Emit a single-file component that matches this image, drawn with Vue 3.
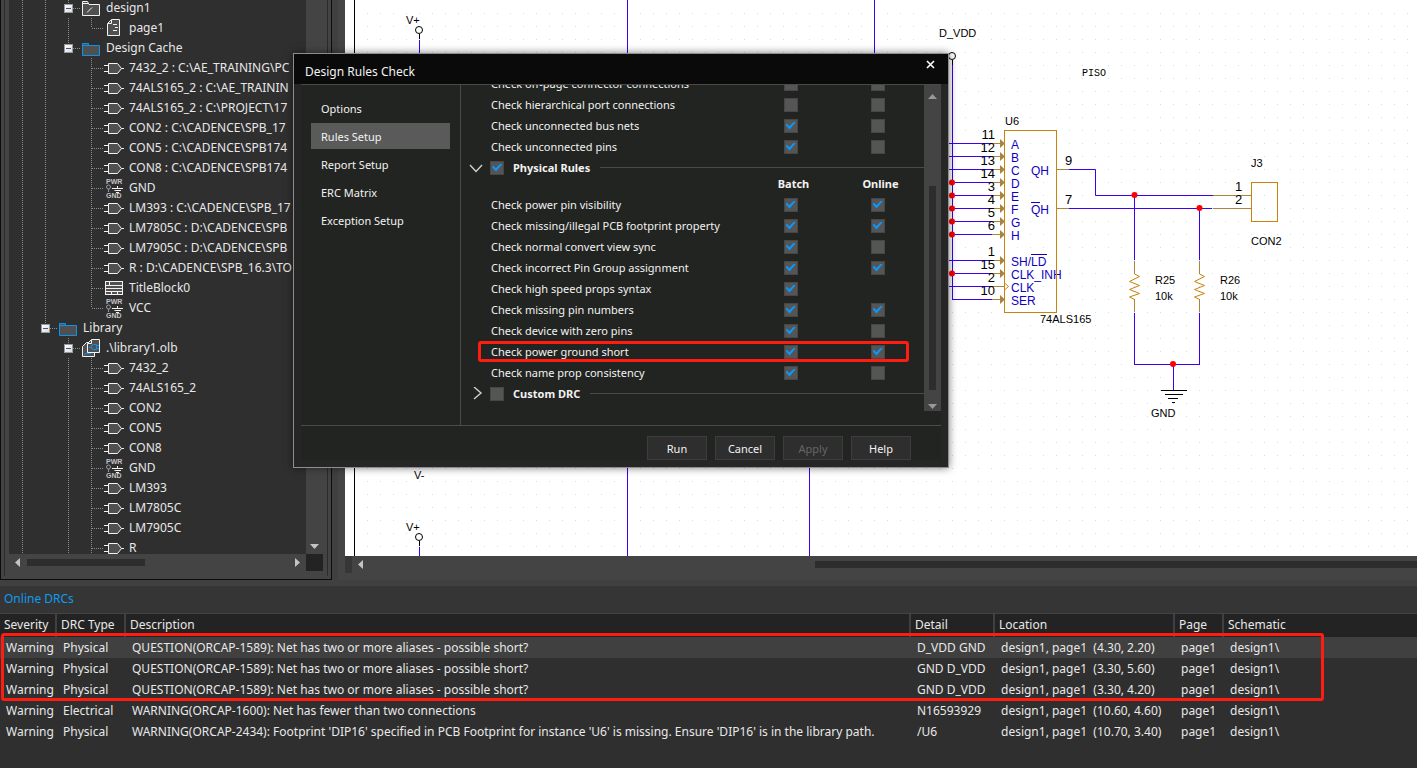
<script setup>
import { ref } from 'vue'

const part = (name, guides = 'vv t') => ({ name, guides, icon: 'gate' })

const tree = [
  { name: 'design1', guides: 'vvX', icon: 'design' },
  { name: 'page1', guides: 'vvvl', icon: 'page' },
  { name: 'Design Cache', guides: 'vvE', icon: 'folder' },
  part('7432_2 : C:\\AE_TRAINING\\PC'),
  part('74ALS165_2 : C:\\AE_TRAININ'),
  part('74ALS165_2 : C:\\PROJECT\\17'),
  part('CON2 : C:\\CADENCE\\SPB_17'),
  part('CON5 : C:\\CADENCE\\SPB174'),
  part('CON8 : C:\\CADENCE\\SPB174'),
  { name: 'GND', guides: 'vv t', icon: 'power' },
  part('LM393 : C:\\CADENCE\\SPB_17'),
  part('LM7805C : D:\\CADENCE\\SPB'),
  part('LM7905C : D:\\CADENCE\\SPB'),
  part('R : D:\\CADENCE\\SPB_16.3\\TO'),
  { name: 'TitleBlock0', guides: 'vv t', icon: 'title' },
  { name: 'VCC', guides: 'vv l', icon: 'power' },
  { name: 'Library', guides: 'vE', icon: 'folder' },
  { name: '.\\library1.olb', guides: 'v X', icon: 'library' },
  part('7432_2', 'v vt'),
  part('74ALS165_2', 'v vt'),
  part('CON2', 'v vt'),
  part('CON5', 'v vt'),
  part('CON8', 'v vt'),
  { name: 'GND', guides: 'v vt', icon: 'power' },
  part('LM393', 'v vt'),
  part('LM7805C', 'v vt'),
  part('LM7905C', 'v vt'),
  part('R', 'v vt'),
]

const tabs = ['Options', 'Rules Setup', 'Report Setup', 'ERC Matrix', 'Exception Setup']
const activeTab = ref('Rules Setup')

const electrical = ref([
  { label: 'Check off-page connector connections', batch: false, online: false },
  { label: 'Check hierarchical port connections', batch: false, online: false },
  { label: 'Check unconnected bus nets', batch: true, online: false },
  { label: 'Check unconnected pins', batch: true, online: false },
])
const physical = ref([
  { label: 'Check power pin visibility', batch: true, online: true },
  { label: 'Check missing/illegal PCB footprint property', batch: true, online: true },
  { label: 'Check normal convert view sync', batch: true, online: false },
  { label: 'Check incorrect Pin Group assignment', batch: true, online: true },
  { label: 'Check high speed props syntax', batch: true, online: null },
  { label: 'Check missing pin numbers', batch: true, online: true },
  { label: 'Check device with zero pins', batch: true, online: false },
  { label: 'Check power ground short', batch: true, online: true, marked: true },
  { label: 'Check name prop consistency', batch: true, online: false },
])
const physicalOn = ref(true)
const customOn = ref(false)

const headers = ['Severity', 'DRC Type', 'Description', 'Detail', 'Location', 'Page', 'Schematic']
const alias = 'QUESTION(ORCAP-1589): Net has two or more aliases - possible short?'
const drcs = [
  ['Warning', 'Physical', alias, 'D_VDD GND', 'design1, page1  (4.30, 2.20)', 'page1', 'design1\\'],
  ['Warning', 'Physical', alias, 'GND D_VDD', 'design1, page1  (3.30, 5.60)', 'page1', 'design1\\'],
  ['Warning', 'Physical', alias, 'GND D_VDD', 'design1, page1  (3.30, 4.20)', 'page1', 'design1\\'],
  ['Warning', 'Electrical', 'WARNING(ORCAP-1600): Net has fewer than two connections', 'N16593929', 'design1, page1  (10.60, 4.60)', 'page1', 'design1\\'],
  ['Warning', 'Physical', "WARNING(ORCAP-2434): Footprint 'DIP16' specified in PCB Footprint for instance 'U6' is missing. Ensure 'DIP16' is in the library path.", '/U6', 'design1, page1  (10.70, 3.40)', 'page1', 'design1\\'],
]

const pins = [
  { n: '11', t: 'A', y: 143.5, from: 940 },
  { n: '12', t: 'B', y: 156.5, from: 940 },
  { n: '13', t: 'C', y: 169.5, from: 940 },
  { n: '14', t: 'D', y: 182.5, from: 952, dot: true },
  { n: '3', t: 'E', y: 195.5, from: 952, dot: true },
  { n: '4', t: 'F', y: 208.5, from: 952, dot: true },
  { n: '5', t: 'G', y: 221.5, from: 952, dot: true },
  { n: '6', t: 'H', y: 234.5, from: 952, dot: true },
  { n: '1', t: 'SH/LD', y: 260.5, from: 940 },
  { n: '15', t: 'CLK_INH', y: 273.5, from: 952, dot: true },
  { n: '2', t: 'CLK', y: 286.5, from: 940, clock: true },
  { n: '10', t: 'SER', y: 299.5, from: 952 },
]
const resistors = [
  { x: 1134.5, top: 195, name: 'R25' },
  { x: 1199.5, top: 208, name: 'R26' },
]
</script>

<template>
  <div class="app">
    <main class="workspace">
      <aside class="project">
        <div class="tree-frame">
          <ul class="tree">
            <li v-for="(node, i) in tree" :key="i" class="node">
              <template v-for="(g, k) in node.guides.split('')" :key="k">
                <span class="guide">
                  <svg class="guide-lines" width="23" height="20">
                    <path v-if="g === 'v' || g === 't'" d="M11.5 0V20" />
                    <path v-if="g === 'l' || g === 'E' || g === 'X'" d="M11.5 0V10" />
                    <path v-if="g !== 'v' && g !== ' '" d="M12 10.5H24" />
                  </svg>
                  <button v-if="g === 'E' || g === 'X'" class="expander" :aria-label="'Collapse ' + node.name"></button>
                </span>
              </template>
              <svg class="node-icon" width="22" height="20">
                <g v-if="node.icon === 'gate'" class="white">
                  <path d="M1 7.5H5M1 13.5H5M18 10.5H21" />
                  <path class="fill" d="M5.5 5.5H14.5L18.5 10.5L14.5 15.5H5.5Z" />
                </g>
                <g v-else-if="node.icon === 'design'" class="white">
                  <path class="fill" d="M2.5 17.5V3.5H7.5L9 6.5H19.5V17.5Z" />
                  <path d="M2.5 5.5H8M7 14.5L12 9.5" />
                </g>
                <g v-else-if="node.icon === 'folder'" class="blue">
                  <path class="fill" d="M2.5 17.5V5.5H8.5V7.5H19.5V17.5Z" />
                  <path d="M2.5 7.5H9" />
                </g>
                <g v-else-if="node.icon === 'page'" class="white">
                  <path class="fill" d="M8.5 1.5H16.5V17.5H4.5V5.5Z" />
                  <path d="M5 5.5H8.5V2M10 6.5H14M12 9.5H15M10 12.5H14" />
                </g>
                <g v-else-if="node.icon === 'title'" class="white">
                  <rect class="fill" x="2.5" y="3.5" width="17" height="13" />
                  <path d="M3 7.5H19M3 10.5H19M3 13.5H19M6.5 4V7M8.5 14V16M14.5 14V16" />
                </g>
                <g v-else-if="node.icon === 'power'">
                  <text class="tiny" x="3" y="6">PWR</text>
                  <text class="tiny" x="3" y="20">GND</text>
                  <g class="white thin">
                    <circle class="dim" cx="5.5" cy="9" r="2" />
                    <path class="dim" d="M5.5 11V14" />
                    <path d="M9 10.5H20M11.5 12.5H18M13 14.5H16M14.5 8V10" />
                  </g>
                </g>
                <g v-else class="white">
                  <path class="fill" d="M2.5 18.5V8.5L6.5 4.5H14.5V18.5Z" />
                  <path class="fill" d="M7.5 14.5V5.5L11.5 1.5H19.5V14.5Z" />
                  <path d="M8 5.5H11.5V2" />
                  <path class="plug" d="M9 9.5H11M11.5 7.5L13.5 6.5H16.5V11.5H13.5L11.5 10.5ZM16.5 7.5H19M16.5 10.5H19M4 16.5L7 15.5H11" />
                </g>
              </svg>
              <span class="node-name">{{ node.name }}</span>
            </li>
          </ul>
          <div class="track-v tree-v"><i class="arrow down"></i></div>
          <div class="track-h tree-h">
            <i class="arrow left"></i><span class="thumb-h"></span><i class="arrow right"></i>
          </div>
          <div class="corner"></div>
        </div>
      </aside>

      <section class="editor">
        <div class="canvas">
          <svg class="sheet" width="100%" height="100%">
            <defs>
              <pattern id="grid" x="3" y="0" width="13" height="13" patternUnits="userSpaceOnUse">
                <rect width="1" height="1" fill="#bfe4f8" />
              </pattern>
            </defs>
            <g transform="translate(-345 0)">
              <rect x="356" y="10" width="4000" height="2000" fill="url(#grid)" />
              <path class="ink" d="M354.5 0V2000" />
              <path class="wire" d="M419.5 40V200M627.5 0V2000M874.5 0V400M809.5 300V2000M419.5 547V2000" />
              <g class="ink">
                <circle cx="419" cy="30" r="3.5" />
                <path d="M419.5 34V39M419.5 541V546M952.5 60V65" />
                <circle cx="419" cy="537" r="3.5" />
                <circle cx="952" cy="56" r="3.5" />
              </g>
              <text class="small" x="406" y="24">V+</text>
              <text class="small" x="414" y="479">V-</text>
              <text class="small" x="406" y="531">V+</text>
              <text class="small" x="939" y="37">D_VDD</text>
              <text class="mono" x="1082" y="76">PISO</text>
              <text class="small" x="1005" y="125">U6</text>
              <text class="small" x="1040" y="323">74ALS165</text>

              <path class="wire" d="M952.5 65V299.5" />
              <g v-for="p in pins" :key="p.t">
                <path class="wire" :d="`M${p.from} ${p.y}H992`" />
                <path class="lead" :d="`M992 ${p.y}H1004`" />
                <path v-if="p.clock" class="body" :d="`M1004.5 ${p.y - 3.5}L1008.5 ${p.y}L1004.5 ${p.y + 3.5}`" />
                <path v-else class="tip" :d="`M1000 ${p.y - 4.5}L1005 ${p.y}L1000 ${p.y + 4.5}Z`" />
                <circle v-if="p.dot" class="joint" cx="952" :cy="p.y" r="3" />
                <text class="pin" x="995" :y="p.y - 4.5" text-anchor="end">{{ p.n }}</text>
                <text class="port" x="1011" :y="p.y + 5.5">{{ p.t }}</text>
              </g>
              <rect class="body" x="1004.5" y="130.5" width="52" height="182" />
              <text class="port" x="1031" y="175">QH</text>
              <text class="port" x="1031" y="214">QH</text>
              <path class="bar" d="M1031 202.5H1040M1031 254.5H1047" />

              <path class="lead" d="M1057 169.5H1069M1057 208.5H1069M1213 195.5H1251M1213 208.5H1251" />
              <path class="wire" d="M1069 169.5H1095.5V195.5H1213M1069 208.5H1212" />
              <text class="pin" x="1065" y="165">9</text>
              <text class="pin" x="1065" y="204">7</text>
              <text class="pin" x="1235" y="191">1</text>
              <text class="pin" x="1235" y="204">2</text>
              <rect class="body" x="1251.5" y="182.5" width="26" height="39" />
              <text class="small" x="1251" y="167">J3</text>
              <text class="small" x="1251" y="245">CON2</text>

              <g v-for="r in resistors" :key="r.name">
                <path class="wire" :d="`M${r.x} ${r.top}V260M${r.x} 313V364`" />
                <path class="lead" :d="`M${r.x} 261V274M${r.x} 299V312`" />
                <path class="body" :d="`M${r.x} 274l5 2.5l-10 5l10 4l-10 4l10 4l-10 3.5l5 2.5`" />
                <text class="small" :x="r.x + 20.5" y="284">{{ r.name }}</text>
                <text class="small" :x="r.x + 20.5" y="300">10k</text>
                <circle class="joint" :cx="r.x" :cy="r.top" r="3" />
              </g>
              <path class="wire" d="M1134 364.5H1200M1173.5 364V390" />
              <circle class="joint" cx="1173" cy="364" r="3" />
              <path class="ink" d="M1161 390.5H1187M1165 394.5H1183M1168 398.5H1178M1172 402.5H1175" />
              <text class="small" x="1151" y="417">GND</text>
            </g>
          </svg>
        </div>
        <div class="track-h editor-h"><i class="arrow left"></i><span class="thumb-h"></span></div>
      </section>

      <section class="dialog" role="dialog" aria-labelledby="dialog-title">
        <header class="dialog-head">
          <h2 id="dialog-title">Design Rules Check</h2>
          <button class="close" aria-label="Close">
            <svg width="9" height="9"><path d="M1 1L8 8M8 1L1 8" /></svg>
          </button>
        </header>
        <div class="dialog-body">
          <nav class="tabs">
            <button v-for="t in tabs" :key="t" class="tab" :class="{ active: t === activeTab }" @click="activeTab = t">{{ t }}</button>
          </nav>
          <div class="rules">
            <div class="rule-list">
              <div v-for="r in electrical" :key="r.label" class="rule">
                <span class="rule-name">{{ r.label }}</span>
                <input v-model="r.batch" type="checkbox" :aria-label="r.label + ', batch'" />
                <input v-model="r.online" type="checkbox" :aria-label="r.label + ', online'" />
              </div>
              <div class="group">
                <svg class="chevron" width="14" height="14"><path d="M1 4L7 10.5L13 4" /></svg>
                <input id="physical" v-model="physicalOn" type="checkbox" />
                <label for="physical">Physical Rules</label>
                <hr />
              </div>
              <div class="rule columns"><span></span><b>Batch</b><b>Online</b></div>
              <div v-for="r in physical" :key="r.label" class="rule" :class="{ marked: r.marked }">
                <span class="rule-name">{{ r.label }}</span>
                <input v-model="r.batch" type="checkbox" :aria-label="r.label + ', batch'" />
                <input v-if="r.online !== null" v-model="r.online" type="checkbox" :aria-label="r.label + ', online'" />
              </div>
              <div class="group">
                <svg class="chevron" width="14" height="14"><path d="M5 0L12 6L5 12" /></svg>
                <input id="custom" v-model="customOn" type="checkbox" />
                <label for="custom">Custom DRC</label>
                <hr />
              </div>
            </div>
            <div class="track-v rules-v"><i class="arrow up"></i><span class="thumb-v"></span><i class="arrow down"></i></div>
          </div>
        </div>
        <footer class="dialog-foot">
          <button>Run</button>
          <button>Cancel</button>
          <button disabled>Apply</button>
          <button>Help</button>
        </footer>
      </section>
    </main>

    <section class="drc">
      <h2>Online DRCs</h2>
      <div class="drc-list">
        <table>
          <colgroup>
            <col class="c-sev" /><col class="c-type" /><col class="c-desc" /><col class="c-detail" /><col class="c-loc" /><col class="c-page" /><col />
          </colgroup>
          <thead>
            <tr><th v-for="h in headers" :key="h" scope="col">{{ h }}</th></tr>
          </thead>
          <tbody>
            <tr v-for="(row, i) in drcs" :key="i" :class="{ selected: i === 0 }">
              <td v-for="(c, k) in row" :key="k">{{ c }}</td>
            </tr>
          </tbody>
        </table>
        <div class="callout"></div>
      </div>
    </section>
  </div>
</template>

<style>
body {
  margin: 0;
  background: #2f2f2f;
}
</style>

<style scoped>
* {
  box-sizing: border-box;
}
.app {
  display: flex;
  flex-direction: column;
  height: 100vh;
  overflow: hidden;
  background: #404040;
  color: #e8e8e8;
  font-family: "Noto Sans", "Open Sans", sans-serif;
  font-size: 12px;
}
button {
  font: inherit;
  color: inherit;
  padding: 0;
}
h2 {
  margin: 0;
  font-weight: 400;
}

.workspace {
  position: relative;
  display: flex;
  flex: 1;
  min-height: 0;
}

/* project tree */
.project {
  width: 332px;
  flex: none;
  padding: 0 3px 3px;
  border: 1px solid #0c0c0c;
  border-top: 0;
  background: #444;
}
.tree-frame {
  display: grid;
  grid-template-columns: 1fr 17px;
  grid-template-rows: 1fr 17px;
  height: 100%;
  border: solid #2b2b2b;
  border-width: 0 1px 0 1px;
  padding: 0 4px 5px;
  background: #444;
}
.tree {
  margin: 0;
  padding: 0 0 0 2px;
  list-style: none;
  overflow: hidden;
  background: #2f2f2f;
  min-height: 0;
}
.node {
  display: flex;
  height: 20px;
  line-height: 20px;
  white-space: nowrap;
}
.node:first-child {
  margin-top: -2px;
}
.guide {
  display: grid;
  place-items: center;
  width: 23px;
  height: 20px;
  flex: none;
}
.guide > * {
  grid-area: 1 / 1;
}
.guide-lines path {
  stroke: #8c8c8c;
  stroke-dasharray: 1 1;
}
.expander {
  width: 9px;
  height: 9px;
  border: 1px solid #9a9a9a;
  background: linear-gradient(#3a55a0, #3a55a0) center / 5px 1px no-repeat, linear-gradient(135deg, #fff, #dcdcdc);
}
.node-icon {
  flex: none;
  margin-right: 4px;
  overflow: visible;
}
.node-icon path,
.node-icon rect,
.node-icon circle {
  fill: none;
}
.node-icon .fill {
  fill: #505050;
}
.white {
  stroke: #f2f2f2;
}
.blue {
  stroke: #0c93ec;
}
.plug {
  stroke: #0c93ec;
}
.dim {
  stroke: #9a9a9a;
}
.tiny {
  font: 700 7px "Liberation Sans", sans-serif;
  fill: #c4c4c4;
}

/* scroll bars */
.track-v,
.track-h {
  display: flex;
  align-items: center;
  background: #444;
}
.track-v {
  flex-direction: column;
  width: 17px;
}
.track-h {
  height: 17px;
}
.tree-v {
  justify-content: flex-end;
  padding-bottom: 5px;
}
.tree-h {
  padding: 0 6px;
}
.tree-h .thumb-h {
  width: 118px;
  margin-left: 7px;
  margin-right: auto;
}
.thumb-h {
  height: 7px;
  background: #2d2d2d;
}
.thumb-v {
  width: 7px;
  background: #2d2d2d;
}
.corner {
  background: #232323;
}
.arrow {
  background: #c4c4c4;
  flex: none;
}
.arrow.left,
.arrow.right {
  width: 5px;
  height: 9px;
}
.arrow.up,
.arrow.down {
  width: 9px;
  height: 5px;
}
.arrow.left {
  clip-path: polygon(100% 0, 100% 100%, 0 50%);
}
.arrow.right {
  clip-path: polygon(0 0, 100% 50%, 0 100%);
}
.arrow.up {
  clip-path: polygon(0 100%, 50% 0, 100% 100%);
}
.arrow.down {
  clip-path: polygon(0 0, 100% 0, 50% 100%);
}

/* schematic */
.editor {
  display: flex;
  flex-direction: column;
  flex: 1;
  min-width: 0;
  margin-left: 6px;
  padding: 0 0 7px 7px;
  background: #444;
}
.canvas {
  flex: 1;
  min-height: 0;
  overflow: hidden;
  background: #fff;
}
.sheet {
  display: block;
}
.sheet path,
.sheet rect.body,
.ink circle {
  fill: none;
}
.sheet .ink,
.sheet .ink circle {
  stroke: #000;
}
.sheet .ink circle {
  fill: #fff;
}
.wire {
  stroke: #3b00f0;
}
.lead {
  stroke: #a8843c;
}
.body {
  stroke: #c8830c;
}
.sheet .tip {
  fill: #a8843c;
}
.joint {
  fill: #f00;
}
.bar {
  stroke: #1200c0;
}
.small {
  font: 11px "Liberation Sans", sans-serif;
}
.pin {
  font: 13px "Liberation Sans", sans-serif;
}
.port {
  font: 12px "Liberation Sans", sans-serif;
  fill: #1200c0;
}
.mono {
  font: 10px "Liberation Mono", monospace;
}
.editor-h {
  flex: none;
  padding-left: 13px;
  border-left: 7px solid #363636;
}
.editor-h .arrow {
  margin-left: -7px;
}
.editor-h .thumb-h {
  flex: 1;
  margin-left: 43%;
}

/* dialog */
.dialog {
  position: absolute;
  left: 293px;
  top: 53px;
  width: 656px;
  border: 1px solid #8e8e8e;
  background: #262626;
  color: #f2f2f2;
  font-size: 11px;
  box-shadow: 0 0 8px rgba(0, 0, 0, 0.5);
}
.dialog-head {
  display: flex;
  justify-content: space-between;
  height: 30px;
  padding: 0 13px 0 11px;
  background: #0a0a0a;
}
.dialog-head h2 {
  font-size: 12px;
  line-height: 35px;
}
.close {
  display: flex;
  align-self: flex-start;
  margin-top: 6px;
  border: 0;
  background: none;
}
.close path {
  stroke: #fff;
  stroke-width: 1.6;
}
.dialog-body {
  display: flex;
  height: 342px;
  margin: 0 7px;
  border: solid #4a4a4a;
  border-width: 1px 0;
  background: #222421;
}
.tabs {
  display: flex;
  flex-direction: column;
  gap: 2px;
  width: 160px;
  flex: none;
  padding: 10px 10px 0;
  border-right: 1px solid #4a4a4a;
}
.tab {
  height: 26px;
  padding: 0 10px;
  border: 0;
  background: none;
  text-align: left;
}
.tab.active {
  background: #5a5a5a;
}
.rules {
  display: flex;
  flex: 1;
  height: 326px;
}
.rule-list {
  flex: 1;
  overflow: hidden;
}
.rule {
  position: relative;
  display: grid;
  grid-template-columns: 1fr 87px 87px;
  align-items: center;
  justify-items: center;
  height: 21px;
  padding: 0 3px 0 30px;
}
.rule:first-child {
  margin-top: -12px;
}
.rule-name {
  justify-self: start;
  white-space: nowrap;
}
.columns {
  height: 16px;
  align-items: start;
  line-height: 12px;
}
.columns b {
  padding-left: 6px;
}
.marked::after {
  content: "";
  position: absolute;
  inset: 0 15px 0 17px;
  border: 3px solid #ff1c10;
  border-radius: 3px;
}
.group {
  display: flex;
  align-items: center;
  height: 21px;
  padding-left: 8px;
  font-weight: 700;
}
.chevron {
  margin-right: 7px;
}
.chevron path {
  fill: none;
  stroke: #d0d0d0;
  stroke-width: 1.4;
}
.group label {
  margin: 0 10px 0 9px;
}
.group hr {
  flex: 1;
  height: 1px;
  margin: 0;
  border: 0;
  background: #4a4a4a;
}
input[type="checkbox"] {
  appearance: none;
  display: block;
  width: 14px;
  height: 14px;
  margin: 0;
  border: 1px solid #474747;
  background: #555;
}
input[type="checkbox"]:checked::after {
  content: "";
  display: block;
  width: 10px;
  height: 8px;
  margin: 2px 1px;
  background: #0a99fb;
  clip-path: polygon(0 45%, 15% 28%, 38% 58%, 85% 0, 100% 14%, 40% 100%);
}
.rules-v {
  padding: 9px 0 2px;
}
.rules-v .arrow {
  background: #999;
}
.rules-v .thumb-v {
  flex: 1;
  margin: 87px 0 14px;
}
.dialog-foot {
  display: flex;
  justify-content: flex-end;
  gap: 8px;
  margin: 0 7px 7px;
  padding: 10px 30px 0 0;
  background: #222421;
}
.dialog-foot button {
  width: 60px;
  height: 24px;
  border: 1px solid #3d3d3d;
  background: #2e2e2e;
}
.dialog-foot button:disabled {
  color: #666;
}

/* DRC results */
.drc {
  flex: none;
  min-height: 188px;
  border-top: 6px solid #404040;
  background: #2f2f2f;
}
.drc h2 {
  height: 27px;
  padding-left: 4px;
  background: #353535;
  color: #0c9cf0;
  font-size: 12px;
  line-height: 26px;
}
.drc-list {
  position: relative;
}
table {
  width: 100%;
  table-layout: fixed;
  border-collapse: separate;
  border-spacing: 0;
  border-top: 1px solid #444;
}
.c-sev {
  width: 57px;
}
.c-type {
  width: 69px;
}
.c-desc {
  width: 785px;
}
.c-detail {
  width: 84px;
}
.c-loc {
  width: 180px;
}
.c-page {
  width: 49px;
}
th,
td {
  white-space: pre;
  text-align: left;
  font-weight: 400;
  height: 21px;
  line-height: 21px;
}
th {
  height: 23px;
  padding: 0 0 2px 4px;
  background: #232323;
  border-right: 2px solid #404040;
}
th:last-child {
  border-right: 0;
}
td {
  padding: 0 0 0 6px;
}
.selected {
  background: #404040;
}
.callout {
  position: absolute;
  left: 1px;
  top: 20px;
  width: 1323px;
  height: 68px;
  border: 3px solid #ff1c10;
  border-radius: 3px;
}
</style>
